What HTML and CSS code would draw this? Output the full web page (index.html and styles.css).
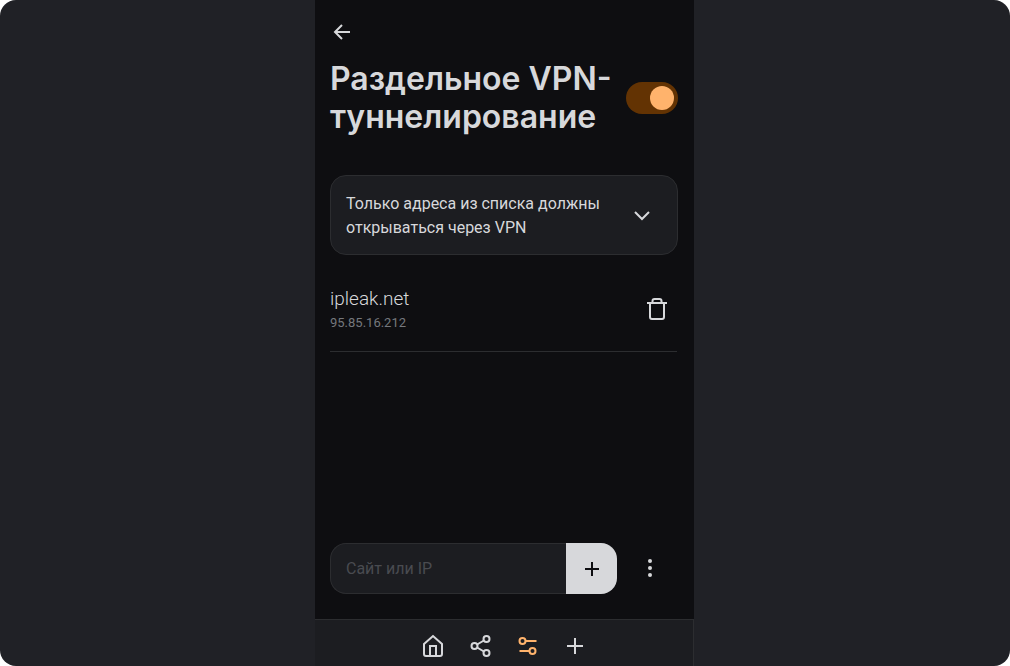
FILE: index.html
```html
<!DOCTYPE html>
<html lang="ru">
<head>
<meta charset="utf-8">
<title>Раздельное VPN-туннелирование</title>
<link rel="stylesheet" href="styles.css">
</head>
<body>
<div class="window">
  <div class="app">
    <main class="page">
      <a class="back" href="#" aria-label="Назад">
        <svg class="icon" viewBox="0 0 24 24"><path d="M20 12H5M12 5l-7 7 7 7"/></svg>
      </a>
      <header class="heading">
        <h1 class="title" id="title">Раздельное VPN-<br>туннелирование</h1>
        <input class="switch" type="checkbox" role="switch" aria-labelledby="title" checked>
      </header>
      <button class="mode" type="button">
        <span class="mode-text">Только адреса из списка должны открываться через VPN</span>
        <svg class="icon" viewBox="0 0 24 24"><path d="M5 8l7 7 7-7"/></svg>
      </button>
      <ul class="sites">
        <li class="site">
          <div class="site-info">
            <span class="site-name">ipleak.net</span>
            <span class="site-ip">95.85.16.212</span>
          </div>
          <button class="icon-button" type="button" aria-label="Удалить">
            <svg class="icon" viewBox="0 0 24 24"><path d="M2 6h20M5 6v14a2 2 0 0 0 2 2h10a2 2 0 0 0 2-2V6M7.500 6V4a2 2 0 0 1 2-2h5a2 2 0 0 1 2 2v2"/></svg>
          </button>
        </li>
      </ul>
      <form class="add">
        <div class="field">
          <input class="field-input" type="text" placeholder="Сайт или IP" aria-label="Сайт или IP">
          <button class="field-button" type="button" aria-label="Добавить">
            <svg class="icon" viewBox="0 0 24 24"><path d="M12 5v14M5 12h14"/></svg>
          </button>
        </div>
        <button class="icon-button" type="button" aria-label="Ещё">
          <svg class="icon dots" viewBox="0 0 24 24"><circle cx="12" cy="4" r="2"/><circle cx="12" cy="11" r="2"/><circle cx="12" cy="18" r="2"/></svg>
        </button>
      </form>
    </main>
    <nav class="tabs">
      <a class="tab" href="#" aria-label="Главная"><svg class="icon" viewBox="0 0 24 24"><path d="M3 10l9-8 9 8v10a2 2 0 0 1-2 2H5a2 2 0 0 1-2-2zM9 22V12h6v10"/></svg></a>
      <a class="tab" href="#" aria-label="Поделиться"><svg class="icon" viewBox="0 0 24 24"><circle cx="18.500" cy="5" r="3"/><circle cx="6.500" cy="12" r="3"/><circle cx="18.500" cy="19" r="3"/><path d="M9.100 13.500l6.800 4M15.900 6.500l-6.800 4"/></svg></a>
      <a class="tab tab-active" href="#" aria-label="Настройки"><svg class="icon" viewBox="0 0 24 24"><circle cx="7.500" cy="7" r="3"/><path d="M10.500 7H21.500M4.500 17h10"/><circle cx="17.500" cy="17" r="3"/></svg></a>
      <a class="tab" href="#" aria-label="Добавить сервер"><svg class="icon" viewBox="0 0 24 24"><path d="M13 4v16M5 12h16"/></svg></a>
    </nav>
  </div>
</div>
</body>
</html>
```
FILE: styles.css
```css
* {
  box-sizing: border-box;
}

body {
  margin: 0;
  background: #fff;
  color: #d7d8db;
  font-family: Roboto, "Noto Sans", sans-serif;
  font-size: 16px;
  line-height: 24px;
}

button,
input {
  font: inherit;
  color: inherit;
}

button {
  border: 0;
  background: none;
  padding: 0;
  cursor: pointer;
}

a {
  color: inherit;
}

.window {
  min-height: 100vh;
  display: flex;
  justify-content: center;
  padding-right: 1px;
  border-radius: 16px;
  background: #202126;
}

.app {
  width: 100%;
  max-width: 379px;
  display: flex;
  flex-direction: column;
  background: #0e0e11;
}

.page {
  flex: 1;
  display: flex;
  flex-direction: column;
  padding: 20px 16px 25px 15px;
}

.icon {
  display: block;
  flex: none;
  width: 24px;
  height: 24px;
  fill: none;
  stroke: currentColor;
  stroke-width: 2;
}

.back {
  align-self: flex-start;
}

.heading {
  display: flex;
  align-items: center;
  justify-content: space-between;
  margin-top: 16px;
}

.title {
  margin: 0;
  font-family: Inter, sans-serif;
  font-size: 32px;
  font-weight: 600;
  line-height: 38px;
  white-space: nowrap;
}

.switch {
  appearance: none;
  display: flex;
  flex: none;
  justify-content: flex-end;
  width: 52px;
  height: 32px;
  margin: 0;
  padding: 4px;
  border-radius: 16px;
  background: #633303;
}

.switch::before {
  content: "";
  width: 24px;
  height: 24px;
  border-radius: 50%;
  background: #ffb36c;
}

.mode {
  display: flex;
  align-items: center;
  gap: 16px;
  margin-top: 39px;
  padding: 16px 23px 14px 15px;
  border: 1px solid #2c2d30;
  border-radius: 16px;
  background: #1c1d21;
  text-align: left;
}

.mode-text {
  flex: 1;
}

.sites {
  flex: 1;
  margin: 0;
  padding: 0;
  list-style: none;
}

.site {
  display: flex;
  align-items: center;
  justify-content: space-between;
  padding: 30px 8px 18px 0;
  margin-right: 1px;
  border-bottom: 1px solid #2c2d30;
}

.site-info {
  display: flex;
  flex-direction: column;
}

.site-name {
  font-size: 19px;
  font-weight: 300;
  line-height: 28px;
}

.site-ip {
  color: #75787d;
  font-size: 13px;
  line-height: 20px;
}

.add {
  display: flex;
  align-items: center;
  justify-content: space-between;
  gap: 21px;
  padding-right: 16px;
}

.field {
  flex: 1;
  min-width: 0;
  display: flex;
}

.field-input {
  flex: 1;
  min-width: 0;
  padding: 13px 15px 12px;
  border: 1px solid #2c2d30;
  border-right: 0;
  border-radius: 16px 0 0 16px;
  background: #1c1d21;
}

.field-input::placeholder {
  color: #494b50;
  opacity: 1;
}

.field-button {
  padding: 0 13px 0 14px;
  border-radius: 0 16px 16px 0;
  background: #d7d8db;
  color: #0e0e11;
}

.dots {
  fill: currentColor;
  stroke: none;
}

.tabs {
  display: flex;
  justify-content: center;
  gap: 23px;
  padding: 14px 1px 8px 0;
  border-top: 1px solid #2c2d30;
  border-right: 1px solid #2c2d30;
  background: #1c1d21;
}

.tab-active {
  color: #ffb36c;
}
```
